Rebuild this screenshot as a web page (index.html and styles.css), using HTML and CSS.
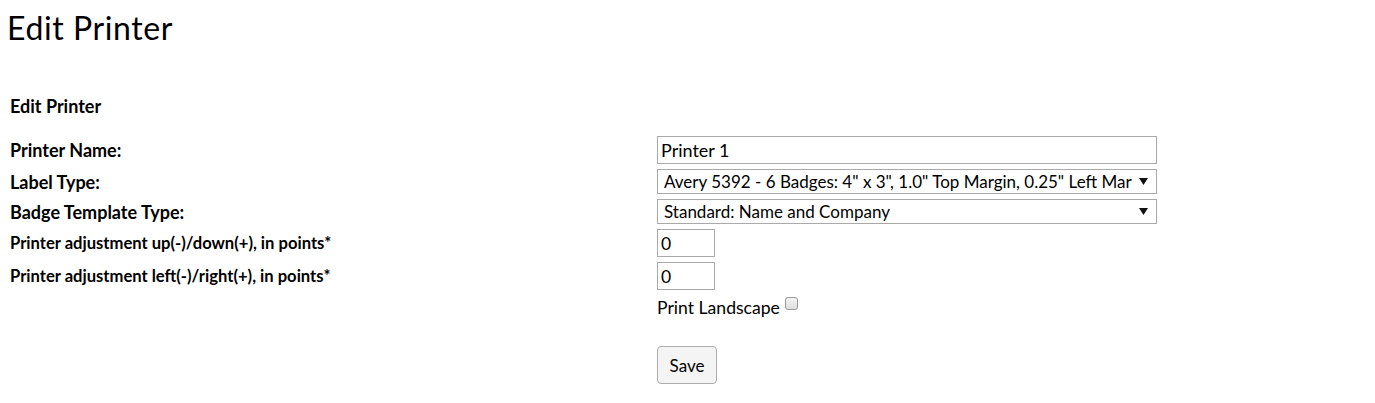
FILE: index.html
```html
<!DOCTYPE html>
<html>
<head>
<meta charset="utf-8">
<link rel="stylesheet" href="styles.css">
</head>
<body>
<h1 class="title">Edit Printer</h1>
<h2 class="subtitle">Edit Printer</h2>
<div class="form">
  <div class="label big">Printer Name:</div>
  <div class="field"><input class="text" type="text" value="Printer 1"></div>

  <div class="label big">Label Type:</div>
  <div class="field">
    <div class="select"><span class="sel-text">Avery 5392 - 6 Badges: 4" x 3", 1.0" Top Margin, 0.25" Left Mar</span><svg class="arrow" width="9" height="7" viewBox="0 0 9 7"><path d="M0 0H9L4.5 7Z" fill="#111"/></svg></div>
  </div>

  <div class="label big">Badge Template Type:</div>
  <div class="field">
    <div class="select"><span class="sel-text">Standard: Name and Company</span><svg class="arrow" width="9" height="7" viewBox="0 0 9 7"><path d="M0 0H9L4.5 7Z" fill="#111"/></svg></div>
  </div>

  <div class="label small">Printer adjustment up(-)/down(+), in points*</div>
  <div class="field"><input class="num" type="text" value="0"></div>

  <div class="label small">Printer adjustment left(-)/right(+), in points*</div>
  <div class="field"><input class="num" type="text" value="0"></div>

  <div class="label"></div>
  <div class="field landscape">Print Landscape <span class="check"></span></div>

  <div class="label"></div>
  <div class="field save-row"><button class="save">Save</button></div>
</div>
</body>
</html>
```
FILE: styles.css
```css
* { box-sizing: border-box; }
body {
  margin: 0;
  font-family: Lato, "Open Sans", sans-serif;
  color: #000;
  background: #fff;
}
.title {
  font-weight: 400;
  font-size: 32px;
  letter-spacing: 0.6px;
  margin: 0;
  padding: 10px 0 0 7px;
  line-height: 36px;
}
.subtitle {
  font-size: 18px;
  font-weight: 700;
  margin: 0;
  padding: 49px 0 0 10px;
  line-height: 22px;
}
.form {
  display: grid;
  grid-template-columns: 647px 500px;
  grid-template-rows: 28px 25px 25px 28px 28px 26px auto;
  padding: 19px 0 0 10px;
  row-gap: 5px;
  align-items: center;
}
.label { font-weight: 700; line-height: 20px; }
.label.big { font-size: 18px; }
.label.small { font-size: 16.6px; }
.field { line-height: 20px; }
.text {
  display: block;
  width: 500px;
  height: 28px;
  border: 1px solid #a9a9a9;
  font-family: Lato, sans-serif;
  font-size: 18px;
  padding: 0 3px;
  color: #000;
  margin: 0;
}
.select {
  width: 500px;
  height: 25px;
  border: 1px solid #a9a9a9;
  display: flex;
  align-items: center;
  padding: 0 8px 0 6px;
  font-size: 17px;
  gap: 5px;
}
.sel-text {
  flex: 1;
  white-space: nowrap;
  overflow: hidden;
  text-overflow: clip;
}
.arrow { flex: none; }
.num {
  display: block;
  width: 58px;
  height: 28px;
  border: 1px solid #a9a9a9;
  font-family: Lato, sans-serif;
  font-size: 17.5px;
  padding: 0 3px;
  margin: 0;
}
.landscape {
  font-size: 17.6px;
  display: flex;
  align-items: center;
  gap: 5px;
  height: 26px;
}
.check {
  display: inline-block;
  width: 13px;
  height: 13px;
  border: 1px solid #999;
  border-radius: 3px;
  background: linear-gradient(#f4f4f4, #dedede);
  margin-top: -9px;
}
.save-row { padding-top: 20px; }
.save {
  display: block;
  width: 60px;
  height: 38px;
  border: 1px solid #adadad;
  border-radius: 4px;
  background: #f4f4f4;
  font-family: Lato, sans-serif;
  font-size: 17px;
  color: #000;
  padding: 0;
}
```
